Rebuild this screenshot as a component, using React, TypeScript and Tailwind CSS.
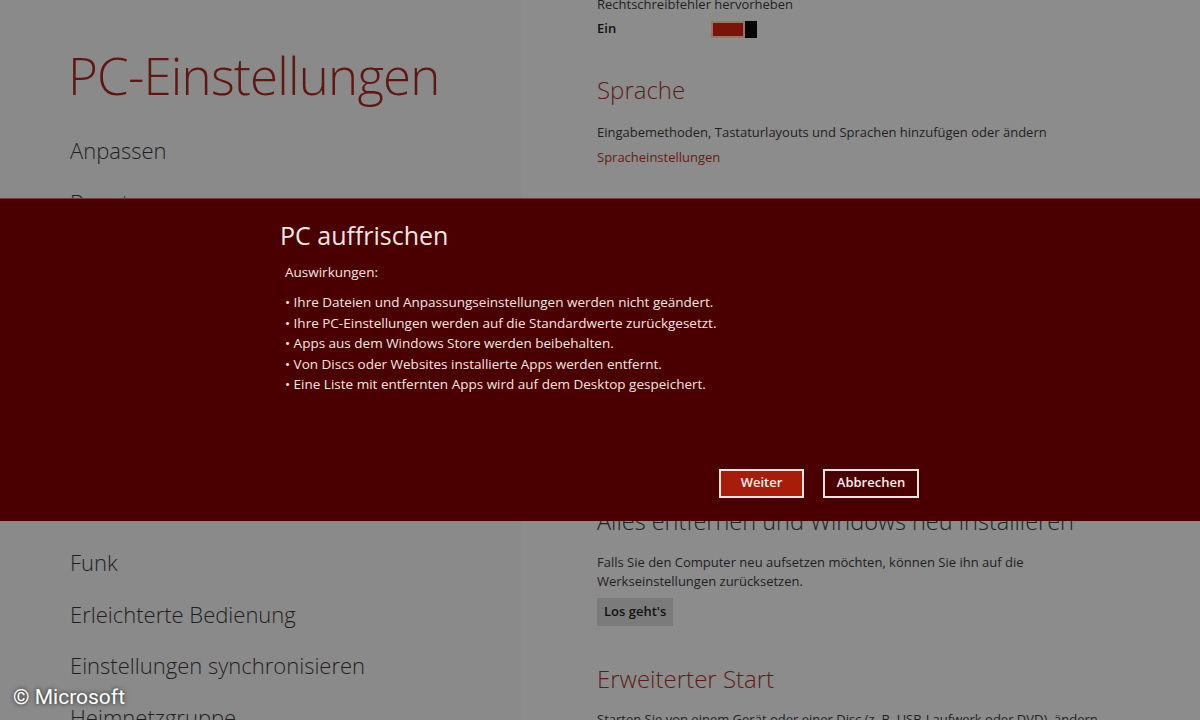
import React from "react";

const navItems = [
  "Anpassen",
  "Benutzer",
  "Benachrichtigungen",
  "Suchen",
  "Teilen",
  "Allgemein",
  "Datenschutz",
  "Geräte",
  "Funk",
  "Erleichterte Bedienung",
  "Einstellungen synchronisieren",
  "Heimnetzgruppe",
  "Windows Update",
];

const effects = [
  "Ihre Dateien und Anpassungseinstellungen werden nicht geändert.",
  "Ihre PC-Einstellungen werden auf die Standardwerte zurückgesetzt.",
  "Apps aus dem Windows Store werden beibehalten.",
  "Von Discs oder Websites installierte Apps werden entfernt.",
  "Eine Liste mit entfernten Apps wird auf dem Desktop gespeichert.",
];

export default function App() {
  return (
    <div className="relative w-[1200px] h-[720px] overflow-hidden bg-[#8b8b8b] font-['Open_Sans',sans-serif]">
      <div className="flex h-full">
        {/* left: navigation */}
        <div className="w-[522px] shrink-0 bg-[#8a8a8a] pl-[68px] pt-[44px]">
          <h1 className="text-[51px] leading-[62px] font-light text-[#601711] tracking-[-0.8px]">
            PC-Einstellungen
          </h1>
          <ul className="mt-[19px] pl-[2px]">
            {navItems.map((item) => (
              <li key={item} className="h-[51.5px] text-[22px] leading-[51.5px] font-light text-[#1f1f1f]">
                {item}
              </li>
            ))}
          </ul>
        </div>

        {/* right: settings */}
        <div className="flex-1 bg-[#8c8c8c] pl-[75px] -mt-[6px]">
          <div className="text-[13px] leading-[20px] text-[#1f1f1f]">Rechtschreibfehler hervorheben</div>
          <div className="flex items-center h-[24px] mt-[3px]">
            <span className="w-[114px] text-[13px] font-semibold text-[#111]">Ein</span>
            <div className="flex items-stretch h-[17px] w-[46px]">
              <div className="flex-1 border-2 border-[#a0706a] bg-[#7a1408]" />
              <div className="w-[12px] bg-[#050505]" />
            </div>
          </div>

          <h2 className="mt-[33px] text-[24px] leading-[32px] font-light text-[#611a14]">Sprache</h2>
          <p className="mt-[16px] text-[13px] leading-[20px] text-[#1f1f1f]">
            Eingabemethoden, Tastaturlayouts und Sprachen hinzufügen oder ändern
          </p>
          <p className="mt-[5px] text-[13px] leading-[20px] text-[#6a1a12]">Spracheinstellungen</p>

          <div className="mt-[124px]">
            <h2 className="text-[24px] leading-[32px] font-light text-[#222]">
              Windows neu installieren, ohne die Dateien zu beeinflussen
            </h2>
          </div>

          <h2 className="mt-[150px] text-[23.5px] leading-[32px] font-light text-[#222]">
            Alles entfernen und Windows neu installieren
          </h2>
          <p className="mt-[16px] w-[440px] text-[13px] leading-[19px] text-[#1f1f1f]">
            Falls Sie den Computer neu aufsetzen möchten, können Sie ihn auf die Werkseinstellungen zurücksetzen.
          </p>
          <button className="mt-[7px] h-[28px] px-[7px] bg-[#7b7b7b] text-[13px] font-semibold text-[#111]">
            Los geht's
          </button>

          <h2 className="mt-[37px] text-[24px] leading-[32px] font-light text-[#611a14]">Erweiterter Start</h2>
          <p className="mt-[14px] text-[13px] leading-[20px] text-[#1f1f1f] whitespace-nowrap">
            Starten Sie von einem Gerät oder einer Disc (z. B. USB-Laufwerk oder DVD), ändern
          </p>
        </div>
      </div>

      {/* dialog band */}
      <div className="absolute left-0 right-0 top-[198px] h-[323px] bg-[#4b0000] border-t border-[#7a3a35]">
        <div className="ml-[280px] pt-[20px] w-[640px] text-[#f3e6e4]">
          <h3 className="text-[25px] leading-[32px] font-normal">PC auffrischen</h3>
          <p className="mt-[11px] pl-[5px] text-[13.5px] leading-[20px]">Auswirkungen:</p>
          <ul className="mt-[10px] pl-[5px] text-[13.5px] leading-[20.5px]">
            {effects.map((e) => (
              <li key={e}>• {e}</li>
            ))}
          </ul>
          <div className="mt-[74px] flex justify-end gap-[19px] pr-[1px]">
            <button className="h-[29px] w-[85px] border-2 border-[#f0e4e2] bg-[#a81d0a] text-[13px] font-semibold text-[#f7eeee]">
              Weiter
            </button>
            <button className="h-[29px] w-[96px] border-2 border-[#f0e4e2] bg-[#4b0000] text-[13px] font-semibold text-[#f7eeee]">
              Abbrechen
            </button>
          </div>
        </div>
      </div>

      {/* watermark */}
      <div className="absolute left-[13px] top-[684px] text-[21px] leading-[26px] text-white font-['Roboto',sans-serif] [text-shadow:0_0_4px_rgba(0,0,0,0.8)]">
        © Microsoft
      </div>
    </div>
  );
}
